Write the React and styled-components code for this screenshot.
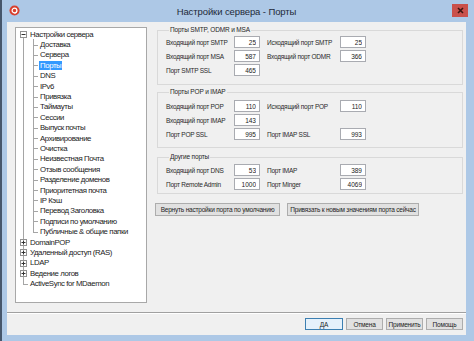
import React from 'react';
import styled, { createGlobalStyle } from 'styled-components';

const GlobalStyle = createGlobalStyle`
  html, body { margin: 0; padding: 0; height: 100%; overflow: hidden; }
  body { background: #46566b; font-family: "Liberation Sans", Arial, sans-serif; }
  #root { height: 100%; }
`;

const Window = styled.div`
  height: 100vh;
  box-sizing: border-box;
  margin-left: 2px;
  padding: 0 8px 6px 5px;
  background: #adc8e6;
  display: flex;
  flex-direction: column;
`;

const TitleBar = styled.div`
  height: 22px;
  flex: none;
  display: grid;
  grid-template-columns: 20px 1fr 20px;
  align-items: start;
`;

const AppIcon = styled.svg`
  width: 11px;
  height: 11px;
  margin: 5px 0 0 2px;
`;

const Title = styled.div`
  text-align: center;
  font-size: 9.5px;
  color: #1e2a38;
  line-height: 12px;
  padding-top: 6px;
  letter-spacing: -0.1px;
`;

const CloseBtn = styled.div`
  justify-self: end;
  margin: 4px -2px 0 0;
  width: 16px;
  height: 13px;
  background: #c9504b;
  display: flex;
  align-items: center;
  justify-content: center;
`;

const Client = styled.div`
  flex: 1;
  background: #f0f0f0;
  display: flex;
  flex-direction: column;
`;

const Main = styled.div`
  flex: 1;
  display: flex;
  padding: 5px 3px 0 8px;
  min-height: 0;
`;

const TreePanel = styled.div`
  width: 132px;
  flex: none;
  box-sizing: border-box;
  background: #fff;
  border: 1px solid #a8a8a8;
  padding-top: 1px;
  font-size: 7.8px;
  color: #1b1b1b;
  letter-spacing: -0.4px;
`;

const TreeRow = styled.div`
  display: flex;
  height: 10.4px;
  align-items: stretch;
`;

const Gutter = styled.span`
  position: relative;
  flex: none;
  width: ${p => p.$w}px;
  &::before {
    content: '';
    display: ${p => (p.$vert ? 'block' : 'none')};
    position: absolute;
    left: ${p => p.$x}px;
    width: 1px;
    top: ${p => (p.$fromMid ? '50%' : '0')};
    bottom: ${p => (p.$toMid ? '50%' : '0')};
    background: #a5a5a5;
  }
  &::after {
    content: '';
    display: ${p => (p.$branch ? 'block' : 'none')};
    position: absolute;
    left: ${p => p.$x}px;
    width: 5px;
    top: 50%;
    height: 1px;
    background: #a5a5a5;
  }
`;

const Expander = styled.span`
  position: absolute;
  z-index: 1;
  left: ${p => p.$x - 3}px;
  top: 50%;
  margin-top: -3px;
  width: 7px;
  height: 7px;
  box-sizing: border-box;
  border: 1px solid #929292;
  background: #fff;
  display: flex;
  align-items: center;
  justify-content: center;
`;

const ItemText = styled.span`
  align-self: center;
  padding: 0 1px;
  line-height: 9px;
  white-space: nowrap;
  background: ${p => (p.$selected ? '#3399ff' : 'transparent')};
  color: ${p => (p.$selected ? '#fff' : 'inherit')};
`;

const RightPanel = styled.div`
  flex: 1;
  margin: -1px 0 0 10px;
  display: flex;
  flex-direction: column;
  font-size: 6.5px;
  color: #2a2a2a;
`;

const Group = styled.fieldset`
  margin: 0 0 ${p => p.$mb}px;
  padding: ${p => p.$pt}px 0 ${p => p.$pb}px 8px;
  border: 1px solid #d9d9d9;
  min-width: 0;
`;

const Legend = styled.legend`
  margin-left: 3px;
  padding: 0 1px;
  line-height: 8px;
  font-size: 6.5px;
  color: #262626;
  letter-spacing: -0.15px;
`;

const FieldGrid = styled.div`
  display: grid;
  grid-template-columns: 68px 26px 80px 26px;
  grid-auto-rows: 12px;
  row-gap: 2px;
  align-items: center;
`;

const FieldLabel = styled.span`
  padding-left: ${p => (p.$second ? 7 : 0)}px;
  white-space: nowrap;
  letter-spacing: -0.25px;
`;

const PortBox = styled.input`
  width: 26px;
  height: 12px;
  box-sizing: border-box;
  border: 1px solid #a9abb1;
  background: #fff;
  font: inherit;
  font-size: 6.5px;
  color: #222;
  text-align: right;
  padding: 0 3px 0 0;
  margin: 0;
  outline: none;
`;

const ActionRow = styled.div`
  display: flex;
  gap: 7px;
  margin: 9px 0 0 -2px;
`;

const PlainButton = styled.button`
  height: ${p => p.$h}px;
  width: ${p => p.$w}px;
  box-sizing: border-box;
  padding: 0;
  margin: 0;
  font-family: inherit;
  font-size: 6.5px;
  color: #1e1e1e;
  background: ${p => (p.$default ? '#e5f1fb' : '#e1e1e1')};
  border: 1px solid ${p => (p.$default ? '#3c7fb1' : '#adadad')};
  white-space: nowrap;
  letter-spacing: -0.2px;
`;

const Separator = styled.div`
  margin-top: 9px;
  height: 1px;
  background: #a0a0a0;
  border-bottom: 1px solid #fff;
`;

const ButtonBar = styled.div`
  display: flex;
  justify-content: flex-end;
  gap: 3px;
  padding: 4px 3px 5px;
`;

const LINE_X = 7;

function Box({ plus }) {
  return (
    <Expander $x={LINE_X}>
      <svg width="5" height="5" viewBox="0 0 5 5">
        <line x1="0.5" y1="2.5" x2="4.5" y2="2.5" stroke="#333" strokeWidth="1" />
        {plus && <line x1="2.5" y1="0.5" x2="2.5" y2="4.5" stroke="#333" strokeWidth="1" />}
      </svg>
    </Expander>
  );
}

const children = [
  'Доставка', 'Сервера', 'Порты', 'DNS', 'IPv6', 'Привязка', 'Таймауты', 'Сессии',
  'Выпуск почты', 'Архивирование', 'Очистка', 'Неизвестная Почта', 'Отзыв сообщения',
  'Разделение доменов', 'Приоритетная почта', 'IP Кэш', 'Перевод Заголовка',
  'Подписи по умолчанию', 'Публичные & общие папки',
];

const siblings = ['DomainPOP', 'Удаленный доступ (RAS)', 'LDAP', 'Ведение логов'];

function Tree() {
  return (
    <TreePanel>
      <TreeRow>
        <Gutter $w={13} $x={LINE_X} $vert $fromMid>
          <Box />
        </Gutter>
        <ItemText>Настройки сервера</ItemText>
      </TreeRow>
      {children.map((name, i) => (
        <TreeRow key={name}>
          <Gutter $w={13} $x={LINE_X} $vert />
          <Gutter $w={10} $x={4} $vert $branch $toMid={i === children.length - 1} />
          <ItemText $selected={name === 'Порты'}>{name}</ItemText>
        </TreeRow>
      ))}
      {siblings.map(name => (
        <TreeRow key={name}>
          <Gutter $w={13} $x={LINE_X} $vert>
            <Box plus />
          </Gutter>
          <ItemText>{name}</ItemText>
        </TreeRow>
      ))}
      <TreeRow>
        <Gutter $w={13} $x={LINE_X} $vert $branch $toMid />
        <ItemText>ActiveSync for MDaemon</ItemText>
      </TreeRow>
    </TreePanel>
  );
}

function Field({ label, value, second }) {
  return (
    <>
      <FieldLabel $second={second}>{label}</FieldLabel>
      <PortBox readOnly value={value} />
    </>
  );
}

function PortsPanel() {
  return (
    <RightPanel>
      <Group $mb={3} $pt={2} $pb={8}>
        <Legend>Порты SMTP, ODMR и MSA</Legend>
        <FieldGrid>
          <Field label="Входящий порт SMTP" value="25" />
          <Field label="Исходящий порт SMTP" value="25" second />
          <Field label="Входящий порт MSA" value="587" />
          <Field label="Входящий порт ODMR" value="366" second />
          <Field label="Порт SMTP SSL" value="465" />
        </FieldGrid>
      </Group>
      <Group $mb={5} $pt={4} $pb={7}>
        <Legend>Порты POP и IMAP</Legend>
        <FieldGrid>
          <Field label="Входящий порт POP" value="110" />
          <Field label="Исходящий порт POP" value="110" second />
          <Field label="Входящий порт IMAP" value="143" />
          <span />
          <span />
          <Field label="Порт POP SSL" value="995" />
          <Field label="Порт IMAP SSL" value="993" second />
        </FieldGrid>
      </Group>
      <Group $mb={0} $pt={3} $pb={3}>
        <Legend>Другие порты</Legend>
        <FieldGrid>
          <Field label="Входящий порт DNS" value="53" />
          <Field label="Порт IMAP" value="389" second />
          <Field label="Порт Remote Admin" value="1000" />
          <Field label="Порт Minger" value="4069" second />
        </FieldGrid>
      </Group>
      <ActionRow>
        <PlainButton $w={125} $h={13}>Вернуть настройки порта по умолчанию</PlainButton>
        <PlainButton $w={132} $h={13}>Привязать к новым значениям порта сейчас</PlainButton>
      </ActionRow>
    </RightPanel>
  );
}

export default function App() {
  return (
    <>
      <GlobalStyle />
      <Window>
        <TitleBar>
          <AppIcon viewBox="0 0 12 12">
            <circle cx="6" cy="6" r="5.5" fill="#d8402f" />
            <circle cx="6" cy="6" r="2.6" fill="none" stroke="#fff" strokeWidth="1.3" />
            <path d="M8.6 6 Q9 9 6 9.2" fill="none" stroke="#fff" strokeWidth="1" />
          </AppIcon>
          <Title>Настройки сервера - Порты</Title>
          <CloseBtn>
            <svg width="7" height="7" viewBox="0 0 7 7">
              <path d="M1 1 L6 6 M6 1 L1 6" stroke="#3b1410" strokeWidth="1.6" />
            </svg>
          </CloseBtn>
        </TitleBar>
        <Client>
          <Main>
            <Tree />
            <PortsPanel />
          </Main>
          <Separator />
          <ButtonBar>
            <PlainButton $w={38} $h={12} $default>ДА</PlainButton>
            <PlainButton $w={37} $h={12}>Отмена</PlainButton>
            <PlainButton $w={37} $h={12}>Применить</PlainButton>
            <PlainButton $w={37} $h={12}>Помощь</PlainButton>
          </ButtonBar>
        </Client>
      </Window>
    </>
  );
}
